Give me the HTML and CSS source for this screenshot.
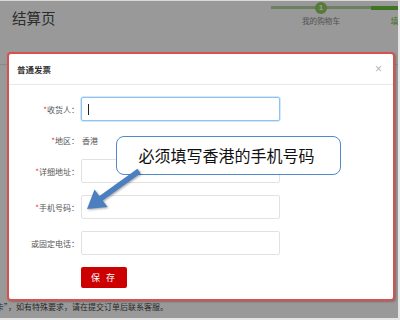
FILE: index.html
```html
<!DOCTYPE html>
<html lang="zh-CN">
<head>
<meta charset="utf-8">
<title>结算页</title>
<link rel="stylesheet" href="styles.css">
</head>
<body>
<div class="frame">
  <div class="page">
    <header class="page-head">
      <h1 class="page-title">结算页</h1>
      <ol class="steps">
        <li class="step step-done"><span class="step-line"></span><span class="step-dot">1</span><span class="step-label">我的购物车</span></li>
        <li class="step step-current"><span class="step-line"></span><span class="step-dot">2</span><span class="step-label">填写核对订单信息</span></li>
      </ol>
    </header>
    <div class="page-body"></div>
    <p class="page-note">卡”，如有特殊要求，请在提交订单后联系客服。</p>
  </div>

  <div class="overlay">
    <div class="modal">
      <div class="modal-head">
        <span class="modal-title">普通发票</span>
        <span class="modal-close">×</span>
      </div>
      <form class="modal-body">
        <div class="row">
          <label class="label"><i>*</i>收货人：</label>
          <div class="input input-focus"><span class="caret"></span></div>
        </div>
        <div class="row row-text">
          <label class="label"><i>*</i>地区：</label>
          <span class="value">香港</span>
        </div>
        <div class="row">
          <label class="label"><i>*</i>详细地址：</label>
          <div class="input"></div>
        </div>
        <div class="row">
          <label class="label"><i>*</i>手机号码：</label>
          <div class="input"></div>
        </div>
        <div class="row">
          <label class="label">或固定电话：</label>
          <div class="input"></div>
        </div>
        <div class="row row-btn">
          <span class="label"></span>
          <button type="button" class="btn-save">保 存</button>
        </div>
      </form>
    </div>
  </div>

  <div class="callout">必须填写香港的手机号码</div>
  <svg class="arrow" width="400" height="320" viewBox="0 0 400 320">
    <line x1="139" y1="170" x2="100" y2="198" stroke="#4b7fc0" stroke-width="5.5" stroke-linecap="butt"/>
    <polygon points="87,208 94.5,188.5 107.5,206" fill="#4b7fc0"/>
  </svg>
</div>
</body>
</html>
```

FILE: styles.css
```css
* { box-sizing: border-box; }
html, body { margin: 0; padding: 0; }
body {
  width: 400px;
  height: 320px;
  overflow: hidden;
  font-family: "Noto Sans CJK SC", "Noto Sans", sans-serif;
  background: #fff;
}
.frame {
  position: relative;
  width: 400px;
  height: 320px;
  overflow: hidden;
  border-right: 2px solid #e6e6e6;
  border-bottom: 2px solid #e6e6e6;
  border-top: 1px solid #d8d8d8;
}
.page {
  background: #fff;
  height: 100%;
}
.page-head {
  display: flex;
  justify-content: space-between;
  height: 64px;
  border-bottom: 1px solid #e4e4e4;
}
.page-title {
  margin: 5px 0 0 12px;
  font-size: 14.5px;
  font-weight: 400;
  color: #4a4a4a;
  line-height: 24px;
}
.steps {
  display: flex;
  list-style: none;
  margin: 0;
  padding: 0;
  margin-right: -73px;
  flex-shrink: 0;
}
.step {
  position: relative;
  width: 100px;
  display: flex;
  flex-direction: column;
  align-items: center;
}
.step-line {
  position: absolute;
  left: 0;
  right: 0;
  top: 5px;
  height: 3px;
  background: #b5d6a2;
}
.step-current .step-line { background: #68c23a; top: 5px; height: 4px; }
.step-dot {
  position: relative;
  width: 12px;
  height: 12px;
  border-radius: 50%;
  margin-top: 1px;
  background: #8fcd5f;
  color: #fff;
  font-size: 8px;
  font-weight: 700;
  line-height: 12px;
  text-align: center;
  font-family: "Liberation Sans", sans-serif;
}
.step-current .step-dot { visibility: hidden; }
.step-label {
  margin-top: 2px;
  font-size: 7.6px;
  color: #8a8a8a;
  white-space: nowrap;
  line-height: 10px;
}
.step-current .step-label { color: #6cc03c; }
.page-body { height: 236px; }
.page-note {
  margin: 0 0 0 -4px;
  font-size: 8px;
  line-height: 12px;
  color: #444;
  white-space: nowrap;
}

.overlay {
  position: absolute;
  inset: 0;
  background: rgba(0, 0, 0, 0.4);
  padding: 51px 0 0 7px;
}
.modal {
  width: 388px;
  background: #fff;
  border: 2px solid #d9514f;
  border-radius: 4px;
  box-shadow: 1px 1px 2px rgba(0,0,0,0.25);
}
.modal-head {
  display: flex;
  justify-content: space-between;
  align-items: center;
  height: 31px;
  padding: 0 11px 0 8px;
  border-bottom: 1px solid #e8e8e8;
}
.modal-title {
  font-size: 8.5px;
  font-weight: 700;
  color: #333;
}
.modal-close {
  font-family: "Liberation Sans", sans-serif;
  font-size: 12px;
  color: #b5b5b5;
  line-height: 12px;
}
.modal-body {
  display: flex;
  flex-direction: column;
  gap: 12px;
  margin: 0;
  padding: 12px 0 11px 0;
}
.row {
  display: flex;
  align-items: center;
  gap: 2px;
  height: 24px;
}
.row-text { height: 14px; }
.row-btn { height: 21px; }
.label {
  width: 70px;
  text-align: right;
  font-size: 8px;
  color: #555;
  white-space: nowrap;
}
.label i {
  font-style: normal;
  color: #e4393c;
}
.value {
  font-size: 8px;
  color: #555;
  padding-left: 1px;
}
.input {
  width: 199px;
  height: 24px;
  border: 1px solid #e2e2e2;
  border-radius: 2px;
  display: flex;
  align-items: center;
  padding-left: 6px;
}
.input-focus {
  border-color: #8ec2f2;
  box-shadow: 0 0 0 0.5px #a9d1f5;
}
.caret {
  width: 1px;
  height: 11px;
  background: #222;
}
.btn-save {
  width: 46px;
  height: 21px;
  border: none;
  border-radius: 2px;
  background: #cc0000;
  color: #fff;
  font-family: "Noto Sans CJK SC", sans-serif;
  font-size: 9px;
  letter-spacing: 2px;
  padding: 0;
}

.callout {
  position: absolute;
  left: 116px;
  top: 135px;
  width: 225px;
  height: 39px;
  border: 1.5px solid #4f89cc;
  border-radius: 8px;
  background: #fff;
  display: flex;
  align-items: center;
  justify-content: center;
  font-size: 16px;
  letter-spacing: 0;
  color: #111;
  padding: 0 4px 1px 0;
}
.arrow {
  position: absolute;
  left: 0;
  top: 0;
  pointer-events: none;
  filter: drop-shadow(1px 1px 0.8px rgba(0,0,0,0.35));
}
```
